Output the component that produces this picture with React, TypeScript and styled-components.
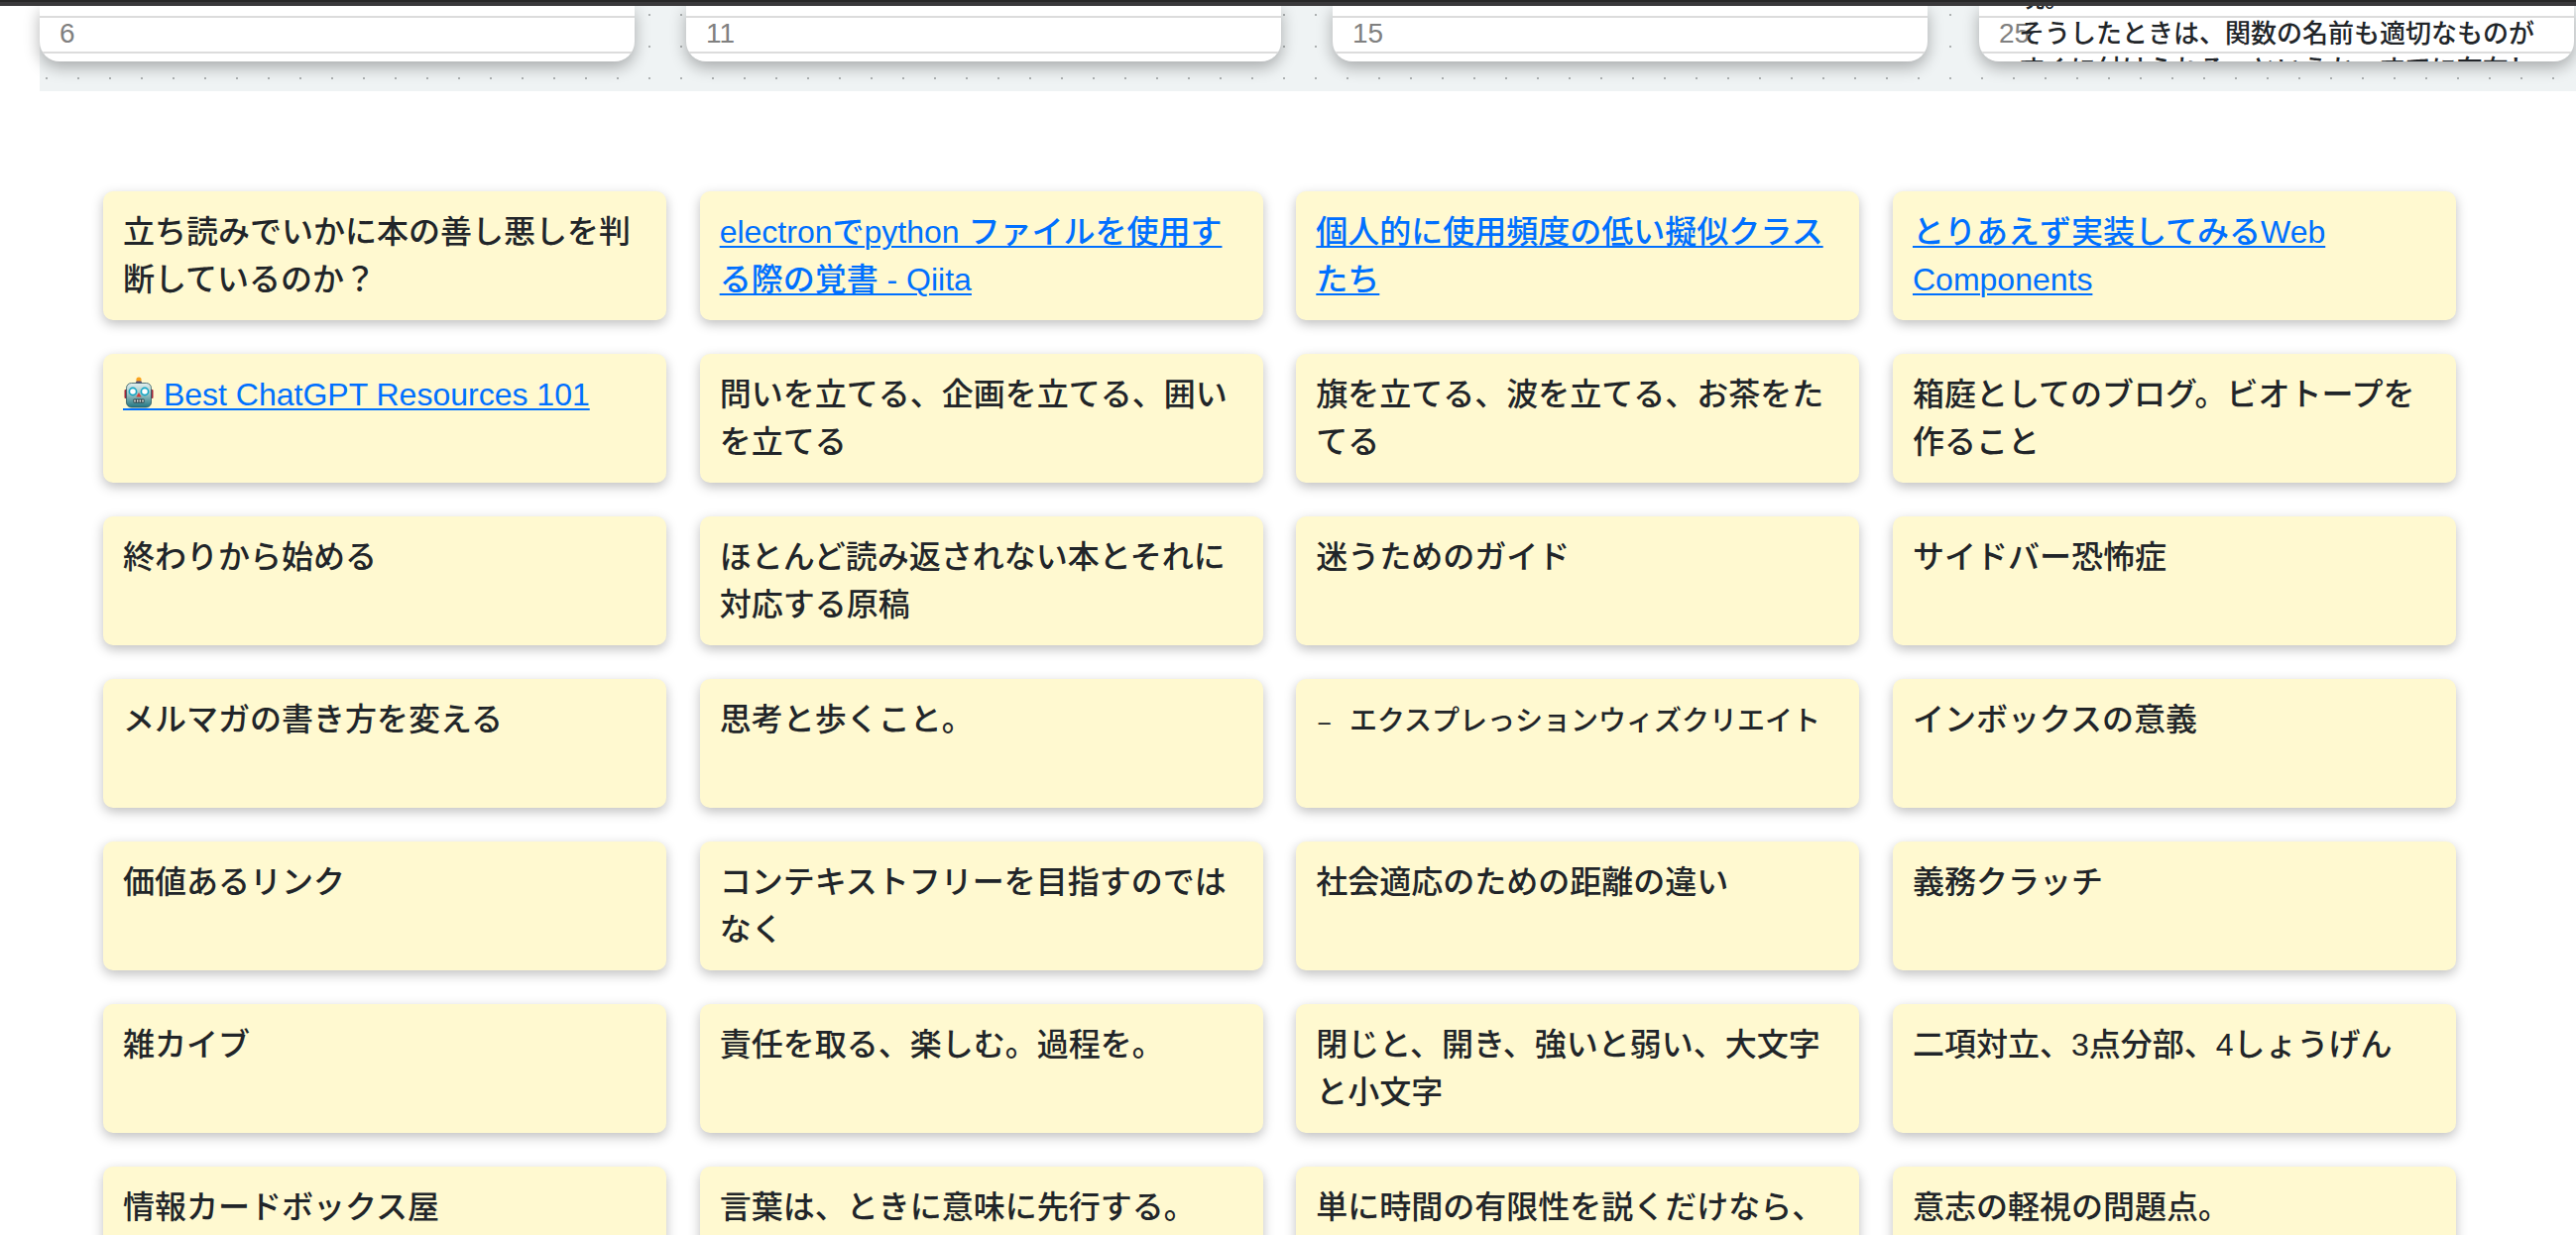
import React from "react";
import styled, { createGlobalStyle } from "styled-components";

const GlobalStyle = createGlobalStyle`
  * { box-sizing: border-box; }
  html, body { height: 100%; overflow: hidden; }
  body {
    margin: 0;
    background: #fff;
    color: #212529;
    font-family: "Liberation Sans", "Noto Sans CJK JP", sans-serif;
    font-weight: 500;
  }
`;

const TopBar = styled.header`
  position: relative;
  z-index: 1;
  height: 6px;
  background: #3a393b;
  border-top: 2px solid #272727;
`;

const Board = styled.section`
  display: grid;
  grid-template-columns: repeat(4, 1fr);
  column-gap: 52px;
  margin-left: 40px;
  padding: 0 2px 30px 0;
  background: conic-gradient(from 270deg at 2px 2px, #adb1b2 90deg, transparent 0) 6px 8px / 32px 32px #eff3f4;
`;

const Page = styled.article`
  height: 56px;
  overflow: hidden;
  background: #fff;
  border-radius: 0 0 20px 20px;
  box-shadow: 0 6px 16px rgba(0, 0, 0, 0.3);
`;

const Lines = styled.ol`
  list-style: none;
  margin: -26px 0 0;
  padding: 0;
`;

const Line = styled.li`
  display: grid;
  grid-template-columns: 20px 1fr;
  height: 36px;
  padding: 0 20px;
  border-top: 2px solid #dcdcdc;
  line-height: 32px;
  font-size: 26px;
  white-space: nowrap;
`;

const LineNumber = styled.span`
  font-size: 28px;
  color: #808080;
`;

const Notes = styled.main`
  display: grid;
  grid-template-columns: repeat(4, minmax(0, 568px));
  justify-content: space-between;
  row-gap: 34px;
  padding: 101px 121px 34px 104px;
`;

const Note = styled.article`
  min-height: 130px;
  padding: 17px 20px;
  background: #fff9d0;
  border-radius: 10px;
  box-shadow: 0 4px 12px rgba(0, 0, 0, 0.25);
  font-size: 32px;
  line-height: 48px;
`;

const NoteLink = styled.a`
  color: #0070ff;
  text-decoration: underline;
  text-decoration-thickness: 2px;
  text-underline-offset: 3px;
`;

const NoteCode = styled.code`
  font-family: "Liberation Mono", "Noto Sans CJK JP", monospace;
  font-size: 28px;
`;

const RobotSvg = styled.svg`
  width: 32px;
  height: 34px;
  border-bottom: 2px solid #0070ff;
  vertical-align: -5px;
`;

const Robot = () => (
  <RobotSvg viewBox="0 0 32 32" role="img" aria-label="robot">
    <defs>
      <linearGradient id="face" x1="0" y1="0" x2="0" y2="1">
        <stop offset="0" stopColor="#e4efee" />
        <stop offset="0.45" stopColor="#9cc4c6" />
        <stop offset="1" stopColor="#1f7480" />
      </linearGradient>
    </defs>
    <circle cx="16" cy="3" r="2.6" fill="#f9a21b" />
    <rect x="13" y="4.5" width="6" height="3" rx="1" fill="#5a4a78" />
    <rect x="1.5" y="13" width="3" height="9" rx="1" fill="#a32638" />
    <rect x="27.5" y="13" width="3" height="9" rx="1" fill="#a32638" />
    <rect x="3.5" y="6.5" width="25" height="24.5" rx="5" fill="url(#face)" stroke="#2c5560" strokeWidth="0.8" />
    <circle cx="10" cy="15" r="3.6" fill="#fff" stroke="#12a5c4" strokeWidth="1.6" />
    <circle cx="22" cy="15" r="3.6" fill="#fff" stroke="#12a5c4" strokeWidth="1.6" />
    <path d="M16 16l2.6 4.5h-5.2z" fill="#d33a35" />
    <rect x="10.5" y="22.5" width="11" height="4" rx="0.8" fill="#2b3d42" />
    <path d="M12 23.5v2M14.7 23.5v2M17.3 23.5v2M20 23.5v2" stroke="#f2f2f2" strokeWidth="1.5" />
  </RobotSvg>
);

type PageLine = { number?: number; text?: string };

const pages: PageLine[][] = [
  [{}, { number: 6 }, {}],
  [{}, { number: 11 }, {}],
  [{}, { number: 15 }, {}],
  [
    { text: "現。" },
    { number: 25, text: "そうしたときは、関数の名前も適切なものが" },
    { text: "すぐに付けられる。というか、すでに存在し" },
  ],
];

type NoteData = { text: string; kind?: "link" | "code"; robot?: boolean };

const notes: NoteData[] = [
  { text: "立ち読みでいかに本の善し悪しを判断しているのか？" },
  { text: "electronでpython ファイルを使用する際の覚書 - Qiita", kind: "link" },
  { text: "個人的に使用頻度の低い擬似クラスたち", kind: "link" },
  { text: "とりあえず実装してみるWeb Components", kind: "link" },
  { text: " Best ChatGPT Resources 101", kind: "link", robot: true },
  { text: "問いを立てる、企画を立てる、囲いを立てる" },
  { text: "旗を立てる、波を立てる、お茶をたてる" },
  { text: "箱庭としてのブログ。ビオトープを作ること" },
  { text: "終わりから始める" },
  { text: "ほとんど読み返されない本とそれに対応する原稿" },
  { text: "迷うためのガイド" },
  { text: "サイドバー恐怖症" },
  { text: "メルマガの書き方を変える" },
  { text: "思考と歩くこと。" },
  { text: "– エクスプレっションウィズクリエイト", kind: "code" },
  { text: "インボックスの意義" },
  { text: "価値あるリンク" },
  { text: "コンテキストフリーを目指すのではなく" },
  { text: "社会適応のための距離の違い" },
  { text: "義務クラッチ" },
  { text: "雑カイブ" },
  { text: "責任を取る、楽しむ。過程を。" },
  { text: "閉じと、開き、強いと弱い、大文字と小文字" },
  { text: "二項対立、3点分部、4しょうげん" },
  { text: "情報カードボックス屋" },
  { text: "言葉は、ときに意味に先行する。" },
  { text: "単に時間の有限性を説くだけなら、" },
  { text: "意志の軽視の問題点。" },
];

const NoteBody = ({ note }: { note: NoteData }) => {
  if (note.kind === "link")
    return (
      <NoteLink href="#">
        {note.robot && <Robot />}
        {note.text}
      </NoteLink>
    );
  if (note.kind === "code") return <NoteCode>{note.text}</NoteCode>;
  return <>{note.text}</>;
};

export default function App() {
  return (
    <>
      <GlobalStyle />
      <TopBar />
      <Board>
        {pages.map((lines, p) => (
          <Page key={p}>
            <Lines>
              {lines.map((line, i) => (
                <Line key={i}>
                  <LineNumber>{line.number}</LineNumber>
                  <span>{line.text}</span>
                </Line>
              ))}
            </Lines>
          </Page>
        ))}
      </Board>
      <Notes lang="ja">
        {notes.map((note) => (
          <Note key={note.text}>
            <NoteBody note={note} />
          </Note>
        ))}
      </Notes>
    </>
  );
}
